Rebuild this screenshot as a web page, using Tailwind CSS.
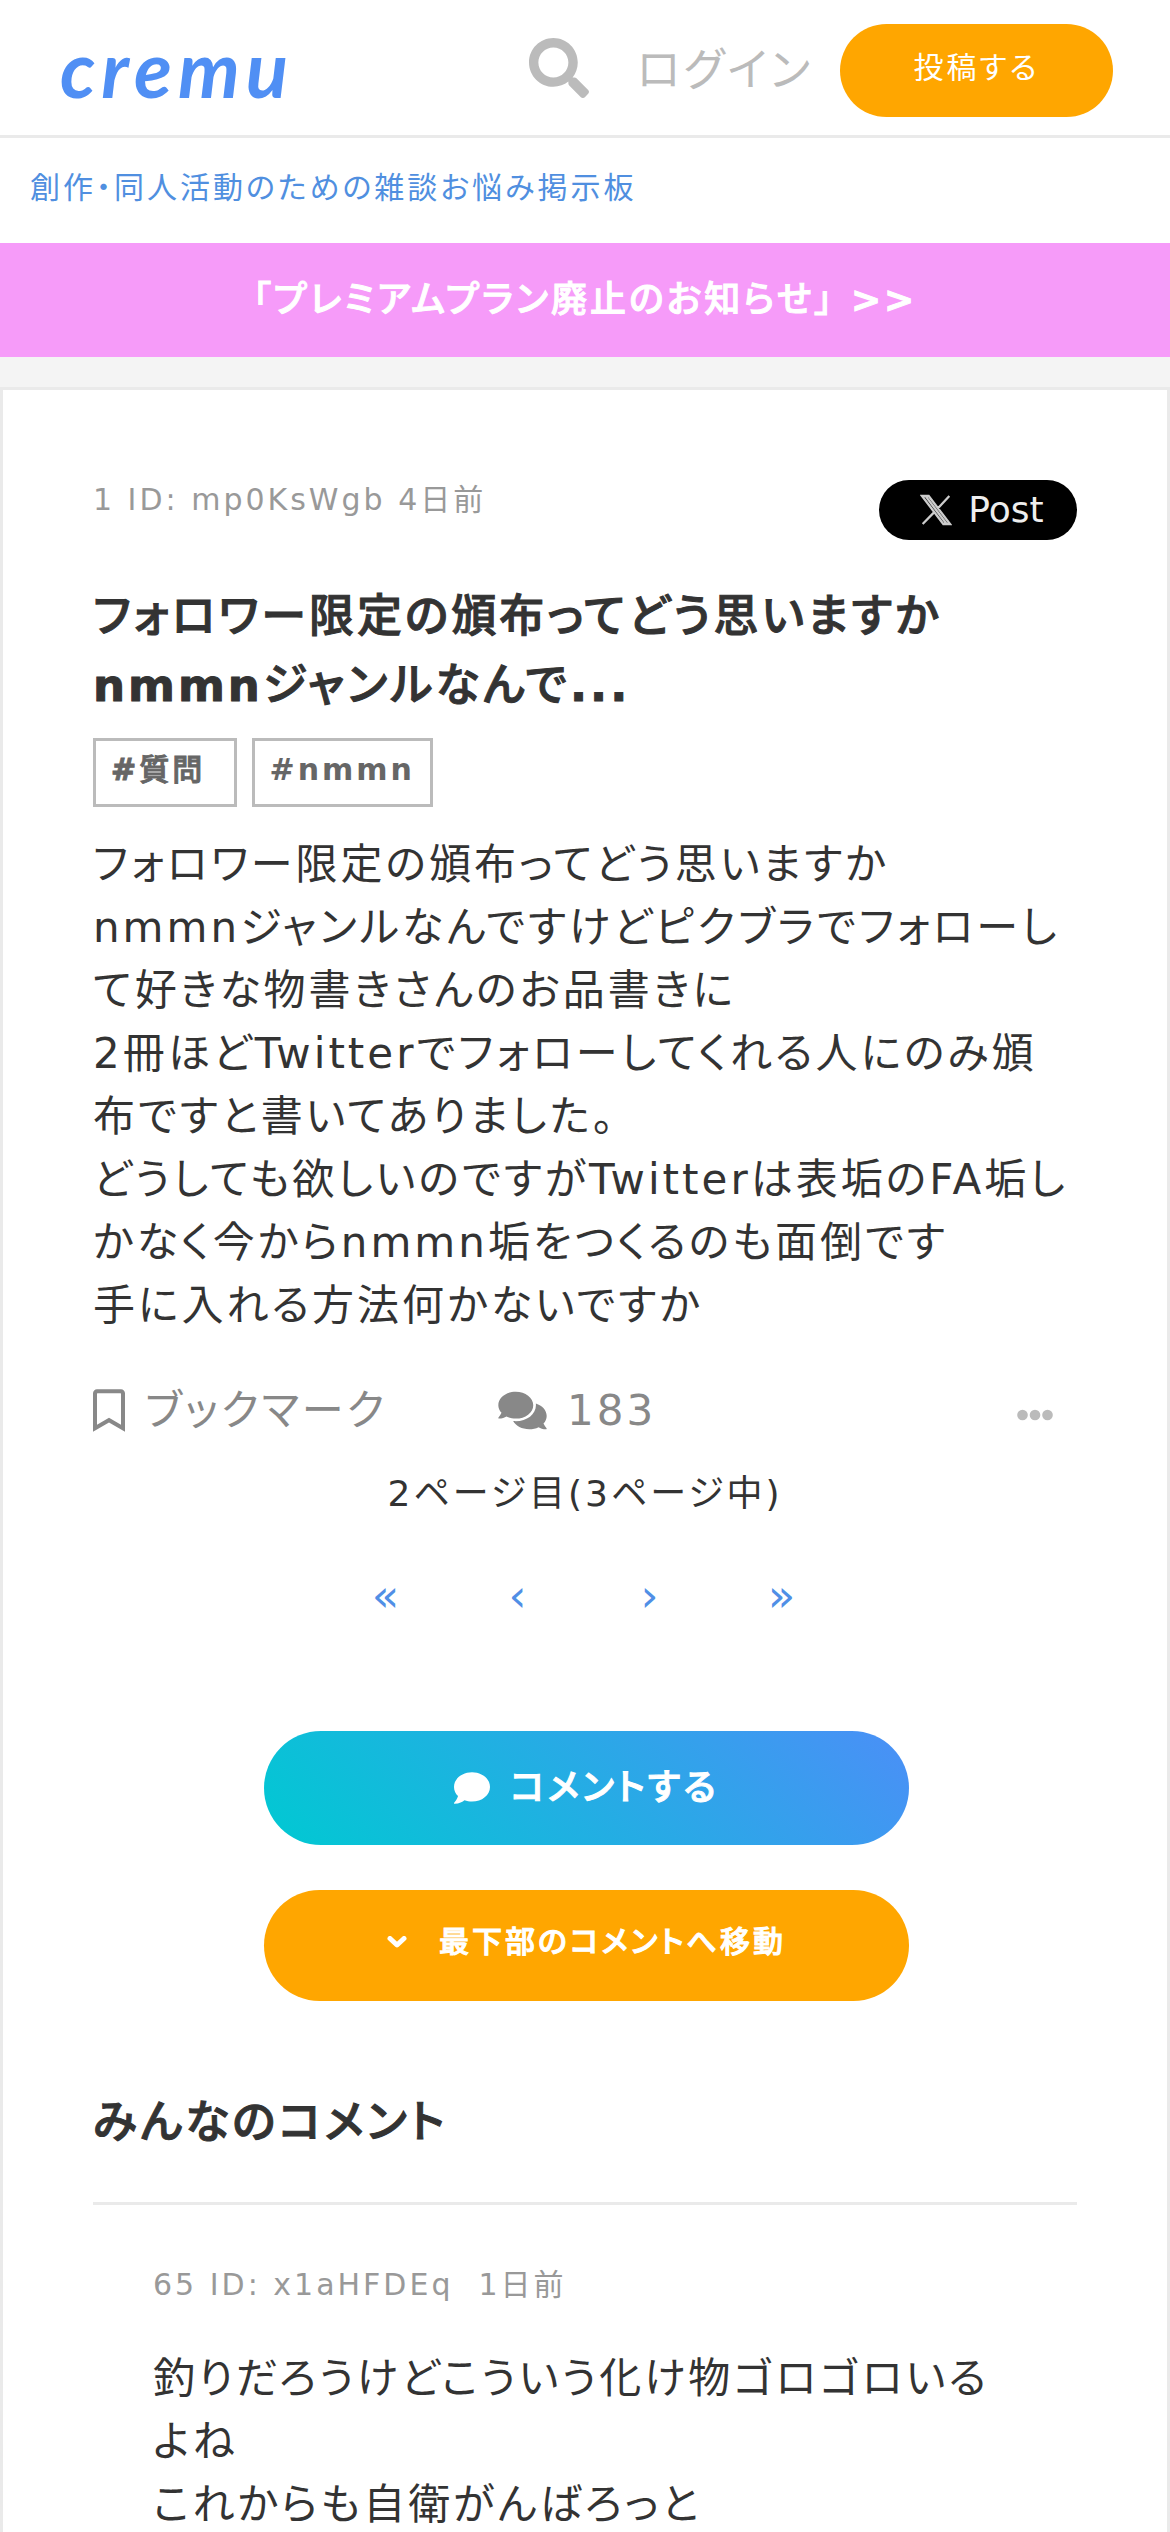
<!DOCTYPE html>
<html lang="ja">
<head>
<meta charset="utf-8">
<meta name="viewport" content="width=device-width, initial-scale=1">
<title>フォロワー限定の頒布ってどう思いますか | cremu</title>
<script src="https://cdn.jsdelivr.net/npm/@tailwindcss/browser@4"></script>
</head>
<body class="bg-[#f4f4f4] font-['DejaVu_Sans','Noto_Sans_CJK_JP',sans-serif] text-[#333] tracking-[3px] [font-feature-settings:'palt']">
<div class="h-screen overflow-y-auto [scrollbar-width:none]">
<header class="bg-white">
  <div class="flex h-[138px] items-center border-b-[3px] border-[#eaeaea] pr-[57px] pl-[60px] pt-[6px]">
    <a href="#" class="pb-[6px] font-[Lato] text-[78px] leading-[96px] font-bold tracking-[6px] italic text-[#508ff4]">cremu</a>
    <a href="#" aria-label="検索" class="ml-auto pb-[6px] text-[#bbb]">
      <svg class="size-[60px]" viewBox="0 0 512 512" fill="currentColor"><path d="M505 442.7L405.300 343c-4.500-4.500-10.600-7-17-7H372c27.600-35.300 44-79.700 44-128C416 93.100 322.900 0 208 0S0 93.100 0 208s93.100 208 208 208c48.300 0 92.700-16.400 128-44v16.300c0 6.400 2.500 12.500 7 17l99.700 99.700c9.400 9.400 24.600 9.400 33.900 0l28.300-28.300c9.400-9.400 9.400-24.600.1-34zM208 336c-70.700 0-128-57.200-128-128 0-70.700 57.200-128 128-128 70.700 0 128 57.200 128 128 0 70.700-57.200 128-128 128z"/></svg>
    </a>
    <a href="#" class="ml-12 text-[45px] leading-[72px] text-[#bbb]">ログイン</a>
    <button type="button" class="ml-[27px] h-[93px] w-[273px] rounded-[48px] bg-[#ffa600] pb-[6px] text-[30px] leading-[45px] tracking-[3px] text-white">投稿する</button>
  </div>
  <p class="px-[30px] pt-[27px] pb-[33px] text-[30px] leading-[45px]"><a href="#" class="text-[#508fe0]">創作・同人活動のための雑談お悩み掲示板</a></p>
</header>
<a href="#" class="block bg-[#f69bf9] py-[30px] text-center font-['DejaVu_Sans','Noto_Sans_CJK_JP_Medium','Noto_Sans_CJK_JP',sans-serif] text-[36px] leading-[54px] font-bold text-white [-webkit-text-stroke:1px]">「プレミアムプラン廃止のお知らせ」 &gt;&gt;</a>

<main class="mt-[30px] border-[3px] border-[#eaeaea] bg-white px-[90px] pt-[90px]">
  <article>
    <div class="flex items-start justify-between">
      <p class="text-[30px] leading-[39px] text-[#999]">1 ID: mp0KsWgb 4日前</p>
      <a href="#" class="flex h-[60px] w-[198px] items-center justify-center gap-4 rounded-full bg-black pr-1 pl-3 text-[36px] leading-[54px] tracking-normal text-[#eee]">
        <svg class="size-8" viewBox="0 0 24 24" fill="none" stroke="#ccc" stroke-width="1.700"><path d="M1.500 1.500h5l16 21h-5zM22 1.500L13.300 10.800M10.700 13.600L2 22.500M4.500 2l15.500 20.500"/></svg>
        <span>Post</span>
      </a>
    </div>
    <h1 class="mt-[42px] font-['DejaVu_Sans','Noto_Sans_CJK_JP_Medium','Noto_Sans_CJK_JP',sans-serif] text-[45px] leading-[69px] font-bold [-webkit-text-stroke:1px]">フォロワー限定の頒布ってどう思いますか<br>nmmnジャンルなんで...</h1>
    <ul class="mt-[18px] flex gap-[15px] font-['DejaVu_Sans','Noto_Sans_CJK_JP_Medium','Noto_Sans_CJK_JP',sans-serif] text-[30px] leading-[45px] font-bold text-[#666]">
      <li><a href="#" class="block border-[3px] border-[#bbb] px-[15px] pt-[6px] pb-3 [-webkit-text-stroke:1px]">#質問&nbsp;</a></li>
      <li><a href="#" class="block border-[3px] border-[#bbb] px-[15px] pt-[6px] pb-3">#nmmn</a></li>
    </ul>
    <p class="mt-[26px] text-[42px] leading-[63px]">フォロワー限定の頒布ってどう思いますか<br>nmmnジャンルなんですけどピクブラでフォローして好きな物書きさんのお品書きに<br>2冊ほどTwitterでフォローしてくれる人にのみ頒布ですと書いてありました。<br>どうしても欲しいのですがTwitterは表垢のFA垢しかなく今からnmmn垢をつくるのも面倒です<br>手に入れる方法何かないですか</p>
    <div class="mt-[42px] flex items-center text-[42px] leading-[63px] text-[#888]">
      <button type="button" class="flex w-[405px] items-center gap-5 tracking-[3px]">
        <svg class="h-[43px] w-8" viewBox="0 0 384 512" fill="currentColor"><path d="M336 0H48C21.490 0 0 21.490 0 48v464l192-112 192 112V48c0-26.510-21.490-48-48-48zm0 428.430l-144-84-144 84V54a6 6 0 0 1 6-6h276c3.314 0 6 2.683 6 5.996V428.430z"/></svg>
        <span>ブックマーク</span>
      </button>
      <span class="flex items-center gap-5">
        <svg class="h-[43px] w-[49px]" viewBox="0 0 576 512" fill="currentColor"><path d="M416 192c0-88.400-93.100-160-208-160S0 103.600 0 192c0 34.300 14.100 65.900 38 92-13.400 30.200-35.500 54.200-35.800 54.500-2.200 2.300-2.800 5.700-1.500 8.700S4.800 352 8 352c36.600 0 66.900-12.300 88.700-25 32.200 15.700 70.300 25 111.300 25 114.900 0 208-71.600 208-160zm122 220c23.900-26 38-57.700 38-92 0-66.900-53.500-124.200-129.300-148.100.9 6.600 1.300 13.300 1.300 20.100 0 105.900-107.700 192-240 192-10.800 0-21.300-.8-31.700-1.900C207.800 439.600 281.800 480 368 480c41 0 79.100-9.200 111.300-25 21.800 12.700 52.100 25 88.700 25 3.200 0 6.100-1.900 7.300-4.800 1.300-2.900.7-6.300-1.500-8.700-.3-.3-22.400-24.200-35.800-54.500z"/></svg>
        <span>183</span>
      </span>
      <button type="button" aria-label="メニュー" class="mr-6 ml-auto pt-[9px] text-[#bbb]">
        <svg class="h-3 w-9" viewBox="0 0 36 12" fill="currentColor"><circle cx="5.500" cy="6" r="5.300"/><circle cx="18" cy="6" r="5.300"/><circle cx="30.500" cy="6" r="5.300"/></svg>
      </button>
    </div>
  </article>

  <p class="mt-[25px] text-center text-[36px] leading-[54px]">2ページ目(3ページ中)</p>
  <nav aria-label="ページ" class="mt-[48px] flex justify-center text-[45px] leading-[54px] text-[#508fe6]">
    <a href="#" class="w-[132px] text-center">«</a>
    <a href="#" class="w-[132px] text-center">‹</a>
    <a href="#" class="w-[132px] text-center">›</a>
    <a href="#" class="w-[132px] text-center">»</a>
  </nav>
  <div class="mt-[108px] flex flex-col items-center gap-[45px] pl-[3px] font-['DejaVu_Sans','Noto_Sans_CJK_JP_Medium','Noto_Sans_CJK_JP',sans-serif] font-bold text-white [-webkit-text-stroke:1px]">
    <button type="button" class="flex h-[114px] w-[645px] items-center justify-center gap-5 rounded-[60px] bg-[linear-gradient(45deg,#00c9d2,#4b8ff7)] text-[36px] leading-[54px] tracking-[3px]">
      <svg class="size-[36px]" viewBox="0 0 512 512" fill="currentColor"><path d="M256 32C114.600 32 0 125.100 0 240c0 49.600 21.400 95 57 130.700C44.500 421.100 2.700 466 2.200 466.500c-2.200 2.300-2.800 5.700-1.500 8.700S4.800 480 8 480c66.300 0 116-31.800 140.600-51.400 32.700 12.300 69 19.400 107.400 19.400 141.400 0 256-93.100 256-208S397.400 32 256 32z"/></svg>
      <span>コメントする</span>
    </button>
    <button type="button" class="flex h-[111px] w-[645px] items-center justify-center gap-8 rounded-[60px] bg-[#ffa600] pb-2 text-[30px] leading-[45px] tracking-[3px]">
      <svg class="h-3 w-5" viewBox="0 0 20 12" fill="none" stroke="currentColor" stroke-width="5" stroke-linecap="round" stroke-linejoin="round"><path d="M3 2.500l7 6.500 7-6.500"/></svg>
      <span>最下部のコメントへ移動</span>
    </button>
  </div>

  <section>
    <h2 class="mt-[87px] border-b-[3px] border-[#eaeaea] pb-[45px] font-['DejaVu_Sans','Noto_Sans_CJK_JP_Medium','Noto_Sans_CJK_JP',sans-serif] text-[45px] leading-[69px] font-bold [-webkit-text-stroke:1px]">みんなのコメント</h2>
    <div class="px-[60px] pt-[57px]">
      <p class="text-[30px] leading-[45px] text-[#999]">65 ID: x1aHFDEq&nbsp; 1日前</p>
      <p class="mt-10 text-[42px] leading-[63px]">釣りだろうけどこういう化け物ゴロゴロいるよね<br>これからも自衛がんばろっと</p>
    </div>
  </section>
</main>
</div>
</body>
</html>
